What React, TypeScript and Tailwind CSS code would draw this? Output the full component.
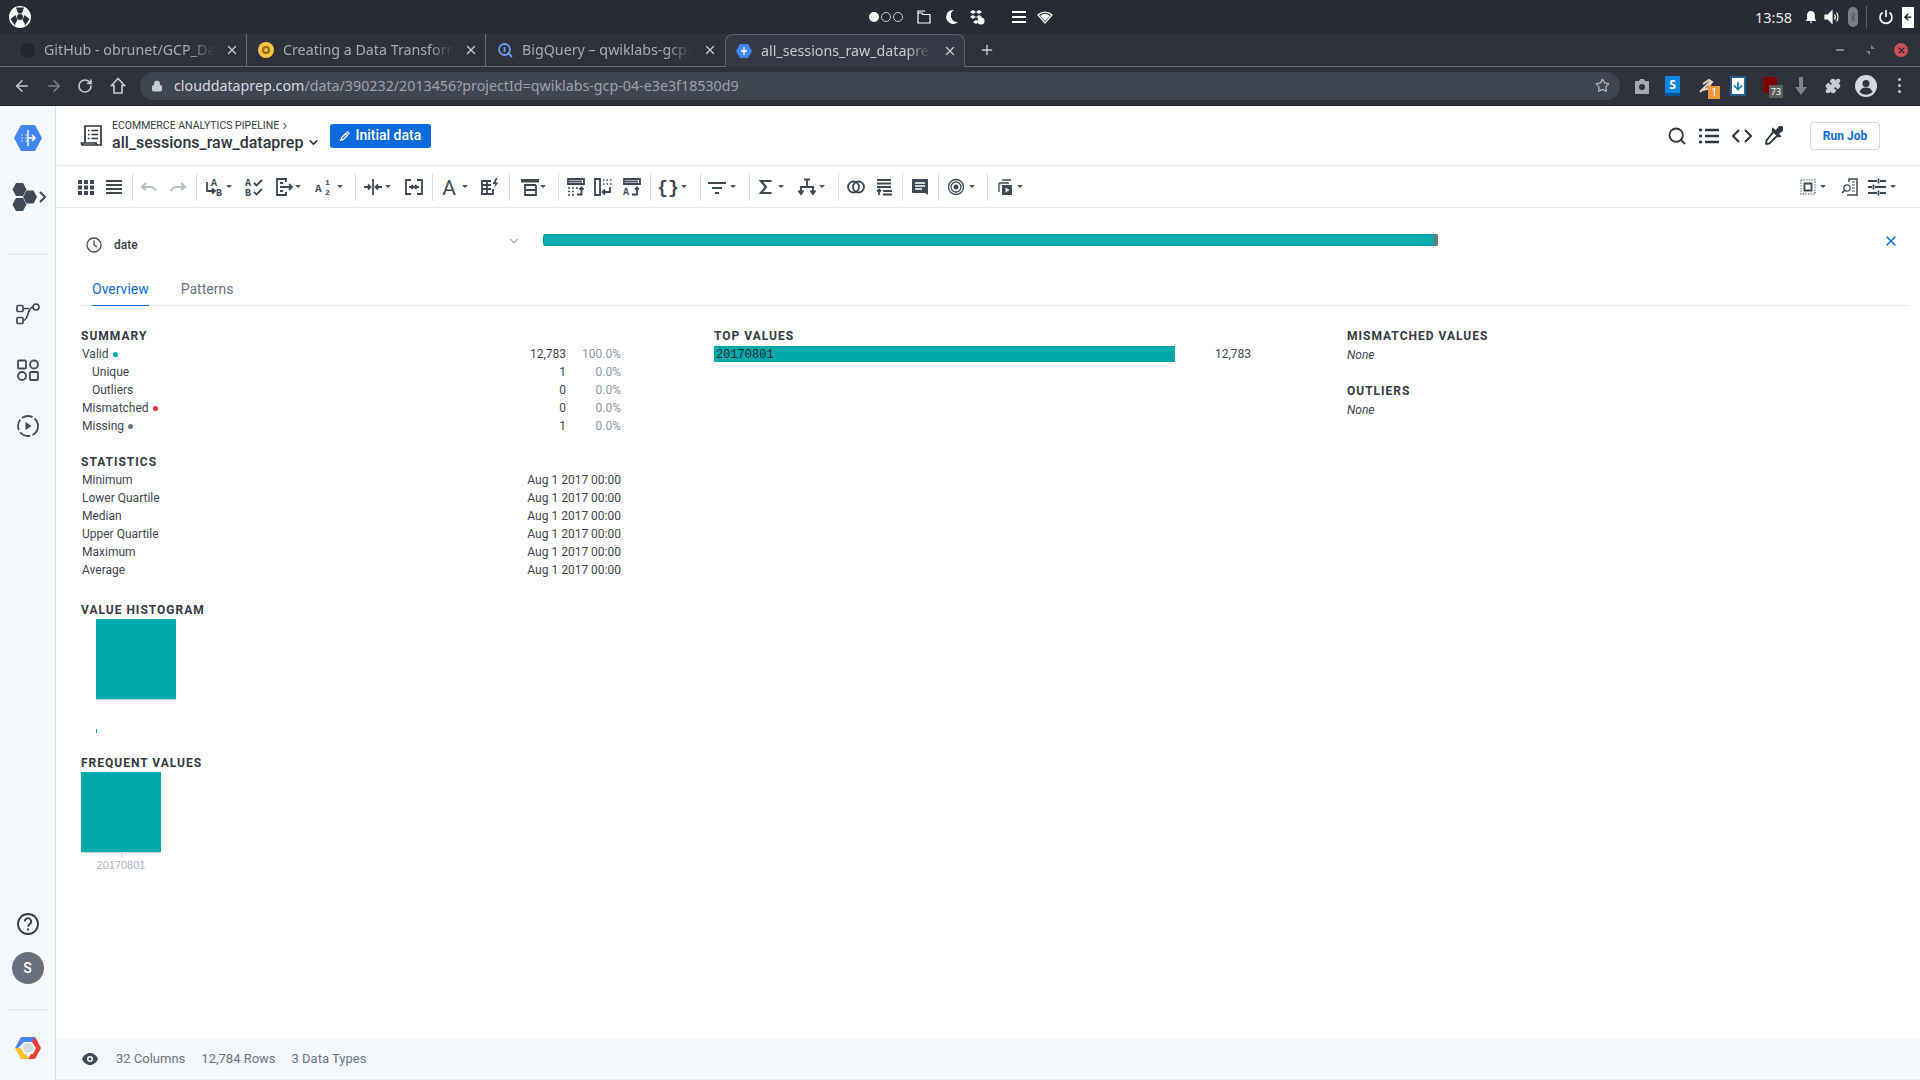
import type { ReactNode } from 'react'
import { ArrowLeft, ArrowRight, RotateCw, Lock, Star, Plus, X, Search, ChevronDown, ChevronRight, Puzzle } from 'lucide-react'

const TEAL = 'bg-[#00a9ac]'

function Ic({ children, className = '' }: { children: ReactNode; className?: string }) {
  return (
    <svg
      viewBox="0 0 20 20"
      fill="none"
      stroke="#3f4954"
      strokeWidth="1.8"
      className={`w-5 h-5 shrink-0 ${className}`}
    >
      {children}
    </svg>
  )
}

function Caret({ className = '' }: { className?: string }) {
  return <span className={`w-[6px] h-0 shrink-0 border-x-[3px] border-x-transparent border-t-[3px] border-t-[#4a5460] ${className}`} />
}

function Sep({ className = '' }: { className?: string }) {
  return <span className={`w-[1px] h-[28px] shrink-0 bg-[#d3dde6] ${className}`} />
}

const mono = 'Liberation Mono, monospace'

function Lt({ x, y, s = 9, children }: { x: number; y: number; s?: number; children: string }) {
  return (
    <text x={x} y={y} fontSize={s} fontWeight="700" fontFamily={mono} fill="#3f4954" stroke="none">
      {children}
    </text>
  )
}

function Toolbar() {
  return (
    <div className="h-[42px] shrink-0 border-b border-[#e6ebf1] flex items-center pl-[20px] pr-[24px]">
      <Ic>
        <path d="M2 3h4v4H2zM8 3h4v4H8zM14 3h4v4h-4zM2 8.500h4v4H2zM8 8.500h4v4H8zM14 8.500h4v4h-4zM2 14h4v4H2zM8 14h4v4H8zM14 14h4v4h-4z" fill="#3f4954" stroke="none" />
      </Ic>
      <Ic className="ml-[8px]">
        <path d="M2 4h16M2 8h16M2 12h16M2 16h16" />
      </Ic>
      <Sep className="ml-[8px]" />
      <Ic className="ml-[6px]">
        <path d="M7 6l-4 4 4 3M3 10h8c3 0 5 1.500 6 4" stroke="#b8c0c9" strokeWidth="2.200" />
      </Ic>
      <Ic className="ml-[9px]">
        <path d="M13 6l4 4-4 3M17 10H9c-3 0-5 1.500-6 4" stroke="#b8c0c9" strokeWidth="2.200" />
      </Ic>
      <Sep className="ml-[8px]" />
      <Ic className="ml-[7px]">
        <Lt x={7} y={9} s={10}>A</Lt>
        <Lt x={12} y={19} s={10}>B</Lt>
        <path d="M3 5v9h7M8 11.500l3 2.500-3 2.500" />
      </Ic>
      <Caret className="ml-[2px]" />
      <Ic className="ml-[12px]">
        <Lt x={1} y={9} s={10}>A</Lt>
        <Lt x={1} y={19} s={10}>B</Lt>
        <path d="M10 6l2.500 2.500L18 3M10 15l2.500 2.500L18 12" />
      </Ic>
      <Ic className="ml-[10px]">
        <path d="M12 5V2H3v16h9v-3M6 6h3M6 14h3M6 10h12M15 7l3 3-3 3" />
      </Ic>
      <Caret className="ml-[1px]" />
      <Ic className="ml-[12px]">
        <Lt x={2} y={15} s={11}>A</Lt>
        <Lt x={12} y={8} s={8}>1</Lt>
        <Lt x={12} y={18} s={8}>2</Lt>
      </Ic>
      <Caret className="ml-[4px]" />
      <Sep className="ml-[12px]" />
      <Ic className="ml-[7px]">
        <path d="M10 2v16M1 10h6M5 7.500l2.500 2.500L5 12.500M13 10h6M15 7.500L12.500 10l2.500 2.500" />
      </Ic>
      <Caret className="ml-[2px]" />
      <Ic className="ml-[13px]">
        <path d="M7 3H2v14h5M13 3h5v14h-5M5 10h4M7.500 8L9.500 10l-2 2M15 10h-4M12.500 8l-2 2 2 2" />
      </Ic>
      <Sep className="ml-[8px]" />
      <svg viewBox="0 0 20 20" className="w-5 h-5 shrink-0 ml-[6px]">
        <text x="10" y="18" textAnchor="middle" fontSize="21" fontFamily="Roboto, sans-serif" fill="#3f4954">A</text>
      </svg>
      <Caret className="ml-[3px]" />
      <Ic className="ml-[12px]">
        <path d="M11 4H2v13h11v-5M2 8h9M2 12h9M7 4v13" />
        <path d="M16 1l-3.500 6h3L14 11l4.500-5.500h-3L17.500 1z" fill="#3f4954" stroke="none" />
      </Ic>
      <Sep className="ml-[9px]" />
      <Ic className="ml-[10px]">
        <path d="M4 8h12M5 8v10h11V8M5 13h11" strokeWidth="1.800" />
        <path d="M1 2h18v3.500H1z" fill="#3f4954" stroke="none" />
      </Ic>
      <Caret />
      <Sep className="ml-[12px]" />
      <Ic className="ml-[7px]">
        <path d="M2 2h16v5H2z" />
        <path d="M3 4.500h13" />
        <path d="M2 11h2M6 11h2M10 11h2M2 14.500h2M6 14.500h2M2 18h2M6 18h2" strokeWidth="1.500" />
        <path d="M11 17.500h4.500V11M13.500 12.500l2-2 2 2" />
      </Ic>
      <Ic className="ml-[7px]">
        <path d="M2 2h5v16H2z" />
        <path d="M10 3h1.500M13.500 3h1.500M17 3h1.500M10 7h1.500M13.500 7h1.500M17 7h1.500" strokeWidth="1.500" />
        <path d="M17 10v5H10M12 12.500L9.500 15l2.500 2.500" />
      </Ic>
      <Ic className="ml-[9px]">
        <path d="M2 2h16v5H2z" />
        <path d="M3 4.500h13" />
        <Lt x={1} y={18} s={10}>A</Lt>
        <path d="M10 17.500h5V11M13 12.500l2-2 2 2" />
      </Ic>
      <Sep className="ml-[8px]" />
      <svg viewBox="0 0 20 20" className="w-5 h-5 shrink-0 ml-[7px]">
        <text x="10" y="16" textAnchor="middle" fontSize="18" fontWeight="700" fontFamily={mono} fill="#3f4954">{'{}'}</text>
      </svg>
      <Caret className="ml-[3px]" />
      <Sep className="ml-[13px]" />
      <Ic className="ml-[6px]">
        <path d="M1 6h18M5 11h10M8 16h4" />
      </Ic>
      <Caret className="ml-[3px]" />
      <Sep className="ml-[13px]" />
      <svg viewBox="0 0 20 20" className="w-5 h-5 shrink-0 ml-[6px]">
        <path d="M15.500 4H5l5 6-5 6h10.500" fill="none" stroke="#3f4954" strokeWidth="2.200" />
      </svg>
      <Caret className="ml-[2px]" />
      <Ic className="ml-[13px]">
        <path d="M7 2.500h6M10 2.500V10M4 15V10h12v5M1.500 13.500L4 17l2.500-3.500M13.500 13.500L16 17l2.500-3.500" strokeWidth="1.900" />
      </Ic>
      <Caret className="ml-[2px]" />
      <Sep className="ml-[13px]" />
      <Ic className="ml-[7px]">
        <circle cx="7.500" cy="10" r="5.500" />
        <circle cx="12.500" cy="10" r="5.500" />
      </Ic>
      <Ic className="ml-[8px]">
        <path d="M3 3h14M3 6.500h14M3 10h14" />
        <path d="M5 18v-5M3 14.500l2-2 2 2M9 14h9M9 17.500h9" />
      </Ic>
      <Sep className="ml-[8px]" />
      <svg viewBox="0 0 20 20" className="w-5 h-5 shrink-0 ml-[7px]">
        <path d="M3 2h14a1 1 0 0 1 1 1v15l-3-2H3a1 1 0 0 1-1-1V3a1 1 0 0 1 1-1z" fill="#3f4954" />
        <path d="M5 6h10M5 9h10M5 12h7" stroke="#fff" strokeWidth="1.300" />
      </svg>
      <Sep className="ml-[8px]" />
      <Ic className="ml-[7px]" >
        <circle cx="10" cy="10" r="7.500" strokeWidth="1.300" />
        <circle cx="10" cy="10" r="5" strokeWidth="1.300" />
        <circle cx="10" cy="10" r="2.500" fill="#3f4954" strokeWidth="0" />
      </Ic>
      <Caret className="ml-[3px]" />
      <Sep className="ml-[12px]" />
      <Ic className="ml-[8px]">
        <path d="M6 3h9M3 6h10M3 6v9" strokeWidth="1.300" />
        <path d="M6 8h9a1 1 0 0 1 1 1v9H7a1 1 0 0 1-1-1z" fill="#3f4954" stroke="none" />
        <path d="M9.500 10.500l4 2.500-4 2.500z" fill="#fff" stroke="none" />
      </Ic>
      <Caret className="ml-[1px]" />

      <Ic className="ml-auto">
        <path d="M3 3h14v14H3z" strokeDasharray="1.300 1.300" strokeWidth="1.400" stroke="#77808a" />
        <path d="M6.500 6.500h7v7h-7z" strokeWidth="1.800" />
      </Ic>
      <Caret className="ml-[2px]" />
      <Ic className="ml-[14px]">
        <path d="M9 5V2h8v16H7" strokeWidth="1.500" />
        <path d="M12 5h3M12 8h3M12 11h3M12 14h3" strokeWidth="1.200" />
        <circle cx="7" cy="11" r="3.200" strokeWidth="1.300" />
        <path d="M4.500 13.500L2 16" strokeWidth="1.500" />
      </Ic>
      <Ic className="ml-[7px]">
        <path d="M1 4h9M13 4h6M11.500 1.500v5M1 10h4M8 10h11M6.500 7.500v5M1 16h9M13 16h6M11.500 13.500v5" />
      </Ic>
      <Caret className="ml-[3px]" />
    </div>
  )
}

function SectionTitle({ children }: { children: string }) {
  return <div className="h-[18px] leading-[18px] text-[12px] font-bold tracking-[1px] text-[#343b43]">{children}</div>
}

function SummaryRow({ label, dot, value, pct, indent }: { label: string; dot?: string; value: string; pct: string; indent?: boolean }) {
  return (
    <div className="h-[18px] flex items-center text-[12px] text-[#3f4750]">
      <span className={indent ? 'pl-[11px]' : 'pl-[1px]'}>{label}</span>
      {dot && <span className={`w-[5px] h-[5px] rounded-full ml-[4px] ${dot}`} />}
      <span className="ml-auto">{value}</span>
      <span className="w-[55px] text-right text-[#8d98a4]">{pct}</span>
    </div>
  )
}

function StatRow({ label }: { label: string }) {
  return (
    <div className="h-[18px] flex items-center justify-between text-[12px] text-[#3f4750]">
      <span className="pl-[1px]">{label}</span>
      <span>Aug 1 2017 00:00</span>
    </div>
  )
}

function Tab({ title, icon, active, sep }: { title: string; icon: ReactNode; active?: boolean; sep?: boolean }) {
  return (
    <div
      className={`h-[33px] shrink-0 flex items-center pr-[7px] border-r ${
        active ? 'w-[240px] pl-[10px] bg-[#363945] rounded-t-[8px] border border-b-0 border-[#5a5e6b] text-[#c8ccd4]' : sep ? 'w-[239px] pl-[11px] border-[#6a6d77] text-[#a7abb4]' : 'w-[239px] pl-[11px] border-transparent text-[#a7abb4]'
      }`}
    >
      <span className="w-[16px] h-[16px] shrink-0 flex items-center justify-center">{icon}</span>
      <span className="ml-[9px] w-[174px] overflow-hidden whitespace-nowrap text-[14.250px] [mask-image:linear-gradient(to_right,black_84%,transparent_98%)]">{title}</span>
      <X className="w-[14px] h-[14px] ml-auto shrink-0 text-[#c8ccd4]" strokeWidth={2.2} />
    </div>
  )
}

function ChromeBars() {
  return (
    <div className="shrink-0 h-[106px] flex flex-col font-['Noto_Sans',sans-serif]">
      <div className="h-[34px] bg-[#282b35] flex items-center text-[#e8e9ec]">
        <svg viewBox="0 0 24 24" className="w-[24px] h-[24px] ml-[8px] shrink-0">
          <circle cx="12" cy="12" r="11" fill="#fff" />
          <circle cx="12" cy="12" r="3" fill="#282b35" />
          <path d="M8 2.500l8 0-2 6h-4zM2.500 14l5-4 2 5-3 5zM21.500 14l-5-4-2 5 3 5z" fill="#282b35" />
        </svg>
        <span className="w-[10px] h-[10px] rounded-full bg-white ml-[837px]" />
        <span className="w-[10px] h-[10px] rounded-full border border-[#c8ccd4] ml-[2px]" />
        <span className="w-[10px] h-[10px] rounded-full border border-[#c8ccd4] ml-[2px]" />
        <svg viewBox="0 0 16 16" className="w-[16px] h-[16px] ml-[13px]" fill="none" stroke="#fff" strokeWidth="1.200">
          <path d="M2 4h4l1 1.500h7V14H2zM2 4V2h7" />
        </svg>
        <svg viewBox="0 0 16 16" className="w-[16px] h-[16px] ml-[12px]">
          <path d="M10 1a7 7 0 1 0 4 12A6.500 6.500 0 0 1 10 1z" fill="#fff" />
        </svg>
        <svg viewBox="0 0 18 18" className="w-[18px] h-[18px] ml-[8px]" fill="#fff">
          <path d="M5 2l3 2-3 2-3-2zM11 2l3 2-3 2-3-2zM5 7l3 2-3 2-3-2zM11 7l3 2-3 2-3-2zM8 12l3 2-3 2-3-2z" />
          <circle cx="13" cy="13" r="3.500" />
        </svg>
        <span className="ml-[26px] w-[14px] flex flex-col gap-[3px]">
          <span className="h-[2px] bg-white" />
          <span className="h-[2px] bg-white" />
          <span className="h-[2px] bg-white" />
        </span>
        <svg viewBox="0 0 16 16" className="w-[16px] h-[16px] ml-[11px]" fill="none" stroke="#fff" strokeWidth="1.200">
          <path d="M1 6a10 10 0 0 1 14 0L8 14z" />
          <path d="M4 7a6 6 0 0 1 8 0L8 11z" fill="#fff" />
        </svg>
        <span className="ml-auto text-[14.500px] leading-none">13:58</span>
        <svg viewBox="0 0 16 16" className="w-[14px] h-[16px] ml-[12px]" fill="#fff">
          <path d="M8 1c3 0 4.500 2 4.500 5v4l1.500 2.500H2L3.500 10V6C3.500 3 5 1 8 1zM6.500 13.500h3L8 15.500z" />
        </svg>
        <svg viewBox="0 0 16 16" className="w-[16px] h-[16px] ml-[6px]" fill="none" stroke="#fff" strokeWidth="1.200">
          <path d="M1 6h3l4-4v12l-4-4H1z" fill="#fff" />
          <path d="M10.500 5.500c1 1.500 1 3.500 0 5M12.500 3.500c2 2.500 2 6.500 0 9" />
        </svg>
        <span className="w-[10px] h-[20px] ml-[8px] rounded-full bg-[#7b7e87] flex items-center justify-center">
          <svg viewBox="0 0 8 14" className="w-[6px] h-[12px]" fill="none" stroke="#4a4d55" strokeWidth="1">
            <path d="M1 4l6 6-3 3V1l3 3-6 6" />
          </svg>
        </span>
        <span className="w-[1px] h-[22px] ml-[8px] bg-[#5a5d66]" />
        <svg viewBox="0 0 16 16" className="w-[16px] h-[16px] ml-[11px]" fill="none" stroke="#fff" strokeWidth="1.600">
          <path d="M8 1v7M4.500 3.500a6 6 0 1 0 7 0" />
        </svg>
        <span className="w-[12px] h-[21px] ml-[8px] mr-[6px] bg-white flex items-center justify-center">
          <ArrowLeft className="w-[10px] h-[10px] text-black" strokeWidth={3} />
        </span>
      </div>

      <div className="h-[33px] bg-[#2f323c] flex items-center pl-[8px] border-b border-[#6b6e78]">
        <Tab
          sep
          title="GitHub - obrunet/GCP_Dataprep"
          icon={<span className="w-[15px] h-[15px] rounded-full bg-[#23252c]" />}
        />
        <Tab
          sep
          title="Creating a Data Transformation"
          icon={
            <span className="w-[16px] h-[16px] rounded-full bg-[#f6c343] flex items-center justify-center">
              <span className="w-[8px] h-[8px] rounded-full border-[2px] border-[#8a6d10]" />
            </span>
          }
        />
        <Tab
          title="BigQuery – qwiklabs-gcp-04"
          icon={
            <svg viewBox="0 0 16 16" className="w-[16px] h-[16px]" fill="none" stroke="#6a9cf0" strokeWidth="1.800">
              <circle cx="7.500" cy="7.500" r="5.500" />
              <path d="M11.500 11.500L15 15M7.500 5v5" />
            </svg>
          }
        />
        <Tab
          active
          title="all_sessions_raw_dataprep"
          icon={
            <svg viewBox="0 0 16 16" className="w-[16px] h-[16px]">
              <path d="M4 1h8l4 7-4 7H4L0 8z" fill="#4285f4" />
              <path d="M8 4v8M5 8h6" stroke="#fff" strokeWidth="1.300" />
            </svg>
          }
        />
        <Plus className="w-[16px] h-[16px] ml-[14px] text-[#c8ccd4]" strokeWidth={2} />
        <span className="ml-auto w-[8px] h-[2px] bg-[#80838c]" />
        <svg viewBox="0 0 10 10" className="w-[10px] h-[10px] ml-[22px]">
          <path d="M5 0v4h4zM0 6h4v4z" fill="#80838c" />
        </svg>
        <span className="w-[14px] h-[14px] rounded-full bg-[#c9505a] ml-[18px] mr-[12px] flex items-center justify-center">
          <X className="w-[9px] h-[9px] text-[#3a2024]" strokeWidth={3.5} />
        </span>
      </div>

      <div className="flex-1 bg-[#2f323c] border-b border-[#20222a] pb-[1px] flex items-center text-[#c8ccd4]">
        <ArrowLeft className="w-[18px] h-[18px] ml-[13px]" />
        <ArrowRight className="w-[18px] h-[18px] ml-[14px] text-[#80838c]" />
        <RotateCw className="w-[16px] h-[16px] ml-[14px]" strokeWidth={2.4} />
        <svg viewBox="0 0 16 18" className="w-[16px] h-[18px] ml-[17px]" fill="none" stroke="#c8ccd4" strokeWidth="1.600">
          <path d="M8 1.500L1.500 8.500H4V16h8V8.500h2.500z" />
        </svg>
        <div className="h-[28px] w-[1480px] ml-[14px] rounded-full bg-[#404552] flex items-center">
          <Lock className="w-[12px] h-[12px] ml-[11px] fill-[#c8ccd4]" />
          <span className="ml-[11px] text-[14.250px] text-[#9da1ab] whitespace-nowrap">
            <span className="text-[#d8dae0]">clouddataprep.com</span>/data/390232/2013456?projectId=qwiklabs-gcp-04-e3e3f18530d9
          </span>
          <Star className="w-[15px] h-[15px] ml-auto mr-[10px] text-[#b0b4bc]" strokeWidth={2} />
        </div>
        <svg viewBox="0 0 16 18" className="w-[16px] h-[18px] ml-[14px]">
          <path d="M1 4h4l1-2h4l1 2h4v13H1z" fill="#a5a8ae" />
          <circle cx="8" cy="10" r="3" fill="#2f323c" />
        </svg>
        <span className="w-[15px] h-[20px] ml-[15px] bg-[#0f86e0] text-white text-[12px] font-bold leading-[18px] text-center border-b-[3px] border-[#0a4f99]">S</span>
        <span className="relative w-[16px] h-[16px] ml-[18px]">
          <svg viewBox="0 0 16 16" className="w-[16px] h-[16px]" fill="none" stroke="#e4d6bc" strokeWidth="2">
            <path d="M2 14L13 3M5 6l6-4 3 2-5 7-5 1" />
          </svg>
          <span className="absolute -right-[6px] top-[8px] w-[12px] h-[13px] bg-[#f0963c] text-white text-[10px] leading-[13px] text-center">1</span>
        </span>
        <span className="w-[16px] h-[20px] ml-[16px] bg-white border-[2px] border-[#22608f] flex items-center justify-center">
          <ArrowLeft className="w-[12px] h-[12px] -rotate-90 text-[#1275c4]" strokeWidth={3.5} />
        </span>
        <span className="relative w-[14px] h-[17px] ml-[17px] rounded-b-[6px] bg-[#800000]">
          <span className="absolute left-[6px] top-[8px] w-[14px] h-[13px] bg-[#5e5e5e] text-white text-[9px] leading-[13px] text-center">73</span>
        </span>
        <svg viewBox="0 0 12 18" className="w-[12px] h-[18px] ml-[18px]">
          <path d="M4 0h4v10h4l-6 8-6-8h4z" fill="#80838c" />
        </svg>
        <Puzzle className="w-[16px] h-[16px] ml-[18px] fill-[#c8ccd4]" />
        <svg viewBox="0 0 22 22" className="w-[22px] h-[22px] ml-[14px]">
          <circle cx="11" cy="11" r="11" fill="#d5d7dc" />
          <circle cx="11" cy="8.500" r="3.500" fill="#2f323c" />
          <path d="M4.500 17a7 7 0 0 1 13 0 9 9 0 0 1-13 0z" fill="#2f323c" />
        </svg>
        <span className="ml-[21px] flex flex-col gap-[3px]">
          <span className="w-[3px] h-[3px] rounded-full bg-[#c8ccd4]" />
          <span className="w-[3px] h-[3px] rounded-full bg-[#c8ccd4]" />
          <span className="w-[3px] h-[3px] rounded-full bg-[#c8ccd4]" />
        </span>
      </div>
    </div>
  )
}

function Sidebar() {
  return (
    <div className="w-[56px] shrink-0 bg-[#f4f7fb] border-r border-[#d3dbe3] flex flex-col items-center justify-between">
      <div className="flex flex-col items-center pt-[18px]">
        <svg viewBox="0 0 28 28" className="w-[28px] h-[28px]">
          <path d="M7 1h14l7 13-7 13H7L0 14z" fill="#4285f4" />
          <path d="M14 6v16M15 14h6M18 11l3 3-3 3" fill="none" stroke="#fff" strokeWidth="1.500" />
          <path d="M7 11h2M11 11h2M7 14h2M11 14h2M7 17h2M11 17h2" stroke="#cfe0fb" strokeWidth="1.200" />
        </svg>
        <svg viewBox="0 0 36 28" className="w-[36px] h-[28px] mt-[31px]">
          <path d="M6 0h7l3.500 6.500L13 13H6L2.500 6.500zM6 15h7l3.500 6.500L13 28H6l-3.500-6.500zM16.500 7.500h7l3.500 6.500-3.500 6.500h-7L13 14z" fill="#414b57" />
          <path d="M30 9l5 5-5 5" fill="none" stroke="#414b57" strokeWidth="2" />
        </svg>
        <span className="w-[40px] h-[2px] bg-[#e6ebf1] mt-[42px]" />
        <svg viewBox="0 0 24 24" className="w-[24px] h-[24px] mt-[47px]" fill="none" stroke="#414b57" strokeWidth="1.700">
          <rect x="1" y="3.500" width="6" height="6" rx="1" />
          <rect x="1" y="15.500" width="6" height="6" rx="1" />
          <circle cx="20" cy="5" r="3" />
          <path d="M7 18.500c6 0 4-13 10-13.500M7 6.500h6" />
        </svg>
        <svg viewBox="0 0 24 24" className="w-[24px] h-[24px] mt-[32px]" fill="none" stroke="#414b57" strokeWidth="1.800">
          <rect x="2" y="2.500" width="8" height="8" rx="1" />
          <circle cx="18" cy="6.500" r="4" />
          <circle cx="6" cy="18" r="4" />
          <rect x="14" y="14" width="8" height="8" rx="1" />
        </svg>
        <svg viewBox="0 0 24 24" className="w-[24px] h-[24px] mt-[32px]" fill="none" stroke="#414b57" strokeWidth="1.800">
          <circle cx="12" cy="12" r="10" strokeDasharray="11 2.500" />
          <path d="M9.500 8l6 4-6 4z" fill="#414b57" stroke="none" />
        </svg>
      </div>
      <div className="flex flex-col items-center pb-[18px]">
        <svg viewBox="0 0 24 24" className="w-[24px] h-[24px]" fill="none" stroke="#343b43" strokeWidth="1.800">
          <circle cx="12" cy="12" r="10" />
          <path d="M8.800 9.500a3.200 3.200 0 1 1 4.800 2.700c-1 .7-1.600 1.300-1.600 2.600" />
          <path d="M12 16.500v2" />
        </svg>
        <span className="w-[32px] h-[32px] mt-[16px] rounded-full bg-[#67727e] text-white text-[14px] font-medium flex items-center justify-center">S</span>
        <span className="w-[40px] h-[2px] bg-[#e6ebf1] mt-[25px]" />
        <svg viewBox="0 0 28 28" className="w-[28px] h-[28px] mt-[23px]">
          <path d="M7 3h14l3 5H10L4 14 1 14z" fill="#4a86ef" />
          <path d="M1 14l6 11h8l-3-5H10l-3-6z" fill="#fbc02d" />
          <path d="M21 3l6 11-6 11h-7l3-5h2l3-6-4-6z" fill="#ea4335" />
          <circle cx="14" cy="14" r="5" fill="#d7dadd" />
        </svg>
      </div>
    </div>
  )
}

export default function App() {
  return (
    <div className="w-[1920px] h-[1080px] overflow-hidden bg-white flex flex-col font-['Roboto',sans-serif]">
      <ChromeBars />
      <div className="flex-1 min-h-0 flex">
        <Sidebar />
        <div className="flex-1 min-w-0 flex flex-col">
          <div className="h-[60px] shrink-0 border-b border-[#e6ebf1] flex items-center pl-[24px] pr-[40px]">
            <svg viewBox="0 0 24 24" className="w-[24px] h-[24px] shrink-0" fill="none" stroke="#2f363d" strokeWidth="1.700">
              <path d="M5 19V2h16v19H3c-1 0-1.500-1-1.500-2h14.500c0 1 .5 2 1.500 2" />
              <path d="M8 6.500h1.500M11.500 6.500H18M8 10.500h1.500M11.500 10.500H18M8 14.500h1.500M11.500 14.500H18" />
            </svg>
            <div className="ml-[8px]">
              <div className="h-[14px] flex items-center text-[10.500px] leading-none text-[#343b43] uppercase">
                Ecommerce Analytics Pipeline
                <ChevronRight className="w-[10px] h-[10px] ml-[1px]" strokeWidth={2.500} />
              </div>
              <div className="h-[19px] flex items-center text-[16px] font-medium text-[#2f363d] whitespace-nowrap">
                all_sessions_raw_dataprep
                <ChevronDown className="w-[13px] h-[13px] ml-[4px]" strokeWidth={2.800} />
              </div>
            </div>
            <div className="ml-[10px] w-[101px] h-[24px] rounded-[3px] bg-[#0b6bdc] text-white text-[14px] font-medium flex items-center justify-center">
              <svg viewBox="0 0 12 12" className="w-[10px] h-[10px] mr-[5px]" fill="none" stroke="#fff" strokeWidth="1.500">
                <path d="M1 11l1-3 5-5 2 2-5 5zM8 2l1-1 2 2-1 1" />
              </svg>
              Initial data
            </div>
            <Search className="w-[20px] h-[20px] ml-auto text-[#2f363d]" strokeWidth={2.200} />
            <svg viewBox="0 0 20 16" className="w-[20px] h-[16px] ml-[12px]" fill="none" stroke="#2f363d" strokeWidth="2.400">
              <path d="M0 2h3M6 2h14M0 8h3M6 8h14M0 14h3M6 14h14" />
            </svg>
            <svg viewBox="0 0 20 14" className="w-[20px] h-[14px] ml-[13px]" fill="none" stroke="#2f363d" strokeWidth="2">
              <path d="M7 1L1 7l6 6M13 1l6 6-6 6" />
            </svg>
            <svg viewBox="0 0 20 20" className="w-[20px] h-[20px] ml-[11px] mr-[1px]" fill="none" stroke="#2f363d" strokeWidth="1.800">
              <path d="M11 5l4 4-8.500 8.500-3 .5-.5-.5.5-3z" />
              <path d="M10 3l7 7-1.500.5L9.500 4.500zM13 5l3-3.500a1.500 1.500 0 0 1 3 3L15.500 7z" fill="#2f363d" />
            </svg>
            <div className="ml-[26px] w-[70px] h-[28px] rounded-[3px] border border-[#cfdbe6] text-[#0b6bdc] text-[12px] font-bold flex items-center justify-center">Run Job</div>
          </div>

          <Toolbar />

          <div className="flex-1 min-h-0 flex flex-col">
            <div className="mt-[26px] h-[20px] flex items-start pl-[30px] pr-[21px]">
              <svg viewBox="0 0 16 16" className="w-[16px] h-[16px] mt-[3px] shrink-0" fill="none" stroke="#414b57" strokeWidth="1.300">
                <circle cx="8" cy="8" r="7" />
                <path d="M8 3.500V8l3 2" />
              </svg>
              <span className="ml-[12px] mt-[1px] w-[393px] text-[12px] leading-[20px] font-medium text-[#343b43]">date</span>
              <ChevronDown className="w-[14px] h-[14px] shrink-0 text-[#8d98a4]" strokeWidth={1.800} />
              <div className={`ml-[22px] w-[895px] h-[12px] rounded-[2px] overflow-hidden flex justify-end ${TEAL}`}>
                <span className="w-[4px] bg-[#6b7580]" />
              </div>
              <X className="w-[16px] h-[16px] ml-auto mt-[-1px] text-[#0b6bdc]" strokeWidth={2.200} />
            </div>

            <div className="mt-[19px] ml-[24px] mr-[10px] h-[33px] border-b border-[#e6ebf1] flex text-[14px]">
              <span className="ml-[12px] h-[33px] border-b border-[#0b6bdc] text-[#0b6bdc] leading-[32px]">Overview</span>
              <span className="ml-[32px] text-[#6b7580] leading-[32px]">Patterns</span>
            </div>

            <div className="pt-[21px] pl-[25px] flex">
              <div className="w-[633px] shrink-0">
                <div className="w-[540px]">
                  <SectionTitle>SUMMARY</SectionTitle>
                  <SummaryRow label="Valid" dot="bg-[#00a9ac]" value="12,783" pct="100.0%" />
                  <SummaryRow indent label="Unique" value="1" pct="0.0%" />
                  <SummaryRow indent label="Outliers" value="0" pct="0.0%" />
                  <SummaryRow label="Mismatched" dot="bg-[#e8333a]" value="0" pct="0.0%" />
                  <SummaryRow label="Missing" dot="bg-[#6b7580]" value="1" pct="0.0%" />

                  <div className="mt-[18px]">
                    <SectionTitle>STATISTICS</SectionTitle>
                  </div>
                  <StatRow label="Minimum" />
                  <StatRow label="Lower Quartile" />
                  <StatRow label="Median" />
                  <StatRow label="Upper Quartile" />
                  <StatRow label="Maximum" />
                  <StatRow label="Average" />
                </div>

                <div className="mt-[22px]">
                  <SectionTitle>VALUE HISTOGRAM</SectionTitle>
                </div>
                <div className={`ml-[15px] w-[80px] h-[81px] border-b border-[#cfd8e1] ${TEAL}`} />
                <div className={`ml-[15px] mt-[29px] w-[1px] h-[4px] ${TEAL}`} />

                <div className="mt-[21px]">
                  <SectionTitle>FREQUENT VALUES</SectionTitle>
                </div>
                <div className={`w-[80px] h-[81px] border-b border-[#cfd8e1] ${TEAL}`} />
                <div className="w-[80px] flex flex-col items-center">
                  <span className="w-[1px] h-[5px] bg-[#cfd8e1]" />
                  <span className="text-[11px] leading-[15px] text-[#aab4bf] font-['Liberation_Sans',sans-serif]">20170801</span>
                </div>
              </div>

              <div className="w-[633px] shrink-0">
                <SectionTitle>TOP VALUES</SectionTitle>
                <div className="w-[537px] flex items-center justify-between">
                  <div className={`w-[461px] h-[16px] pl-[2px] text-[12px] leading-[18px] text-[#1f252b] font-['Liberation_Mono',monospace] ${TEAL}`}>20170801</div>
                  <span className="text-[12px] text-[#3f4750]">12,783</span>
                </div>
              </div>

              <div>
                <SectionTitle>MISMATCHED VALUES</SectionTitle>
                <div className="h-[20px] leading-[20px] text-[12px] italic text-[#3f4750]">None</div>
                <div className="mt-[17px]">
                  <SectionTitle>OUTLIERS</SectionTitle>
                </div>
                <div className="h-[20px] leading-[20px] text-[12px] italic text-[#3f4750]">None</div>
              </div>
            </div>

            <div className="mt-auto h-[42px] bg-[#f4f7fb] border-b border-[#e6ebf1] flex items-center pl-[26px] text-[13px] text-[#6b7580]">
              <svg viewBox="0 0 16 12" className="w-[16px] h-[12px]">
                <path d="M8 0c3.500 0 6.500 2.500 8 6-1.500 3.500-4.500 6-8 6s-6.500-2.500-8-6c1.500-3.500 4.500-6 8-6z" fill="#414b57" />
                <circle cx="8" cy="6" r="3" fill="#f4f7fb" />
                <circle cx="8" cy="6" r="1.500" fill="#414b57" />
              </svg>
              <span className="ml-[18px]">32 Columns</span>
              <span className="ml-[16px]">12,784 Rows</span>
              <span className="ml-[16px]">3 Data Types</span>
            </div>
          </div>
        </div>
      </div>
    </div>
  )
}
